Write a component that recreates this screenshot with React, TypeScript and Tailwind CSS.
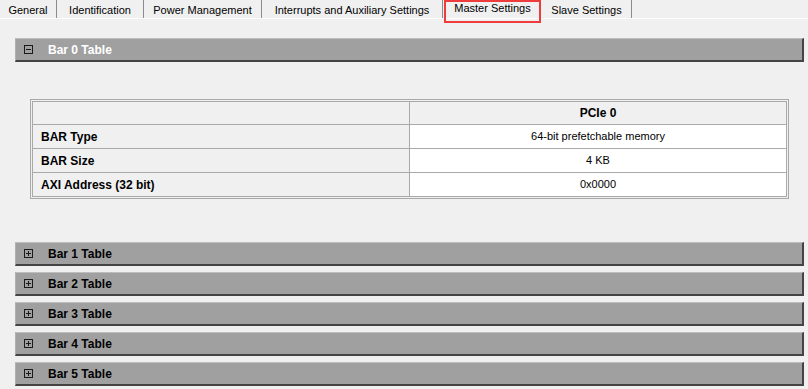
const tabs = [
  { label: "General", w: "w-[57px]" },
  { label: "Identification", w: "w-[87px]" },
  { label: "Power Management", w: "w-[118px]" },
  { label: "Interrupts and Auxiliary Settings", w: "w-[181px]" },
  { label: "Master Settings", w: "w-[99px]", active: true },
  { label: "Slave Settings", w: "w-[90px]" },
];

const rows = [
  { name: "BAR Type", value: "64-bit prefetchable memory" },
  { name: "BAR Size", value: "4 KB" },
  { name: "AXI Address (32 bit)", value: "0x0000" },
];

const ToggleIcon = ({ open }: { open: boolean }) => (
  <svg width="9" height="9" viewBox="0 0 9 9" className="shrink-0">
    <rect x="0.5" y="0.5" width="8" height="8" fill="none" stroke="#1a1a1a" />
    <line x1="2" y1="4.5" x2="7" y2="4.5" stroke="#1a1a1a" />
    {!open && <line x1="4.5" y1="2" x2="4.5" y2="7" stroke="#1a1a1a" />}
  </svg>
);

const BarHeader = ({ title, open }: { title: string; open?: boolean }) => (
  <div className="flex h-[24px] items-center border-t border-l border-t-[#bdbdbd] border-l-[#b0b0b0] border-b-2 border-r-2 border-b-[#444444] border-r-[#444444] bg-[#a0a0a0] pl-[8px]">
    <ToggleIcon open={!!open} />
    <span
      className={`ml-[15px] text-[12px] font-bold ${open ? "text-white" : "text-black"}`}
    >
      {title}
    </span>
  </div>
);

export default function App() {
  return (
    <div className="h-[389px] w-[808px] overflow-hidden bg-[#f0f0f0] font-['Liberation_Sans',Arial,sans-serif] text-[11px] text-black">
      {/* tab strip */}
      <div className="flex h-[19px] items-stretch border-b border-white">
        {tabs.map((t) => (
          <div
            key={t.label}
            className={`relative flex ${t.w} items-center justify-center ${
              t.active ? "pb-[2px]" : "border-r border-r-[#8c8c8c] pt-[2px]"
            }`}
          >
            <span className="whitespace-nowrap">{t.label}</span>
            {t.active && (
              <div className="absolute left-[1px] right-[1px] top-0 h-[23px] border-2 border-[#ee3b3b]" />
            )}
          </div>
        ))}
      </div>

      <div className="pl-[15px] pr-[4px] pt-[19px]">
        <BarHeader title="Bar 0 Table" open />

        <div className="mx-[15px] mt-[37px] border border-[#a9a9a9] p-[1px]">
          <div className="grid grid-cols-2 border-t border-l border-[#a9a9a9]">
            <div className="h-[23px] border-r border-b border-[#a9a9a9]" />
            <div className="flex h-[23px] items-center justify-center border-r border-b border-[#a9a9a9] text-[12px] font-bold">
              PCIe 0
            </div>
            {rows.map((r) => (
              <div key={r.name} className="contents">
                <div className="flex h-[24px] items-center border-r border-b border-[#a9a9a9] pl-[8px] text-[12px] font-bold">
                  {r.name}
                </div>
                <div className="flex h-[24px] items-center justify-center border-r border-b border-[#a9a9a9] bg-white">
                  {r.value}
                </div>
              </div>
            ))}
          </div>
        </div>

        <div className="mt-[43px] flex flex-col gap-[6px]">
          {[1, 2, 3, 4, 5].map((n) => (
            <BarHeader key={n} title={`Bar ${n} Table`} />
          ))}
        </div>
      </div>
    </div>
  );
}
